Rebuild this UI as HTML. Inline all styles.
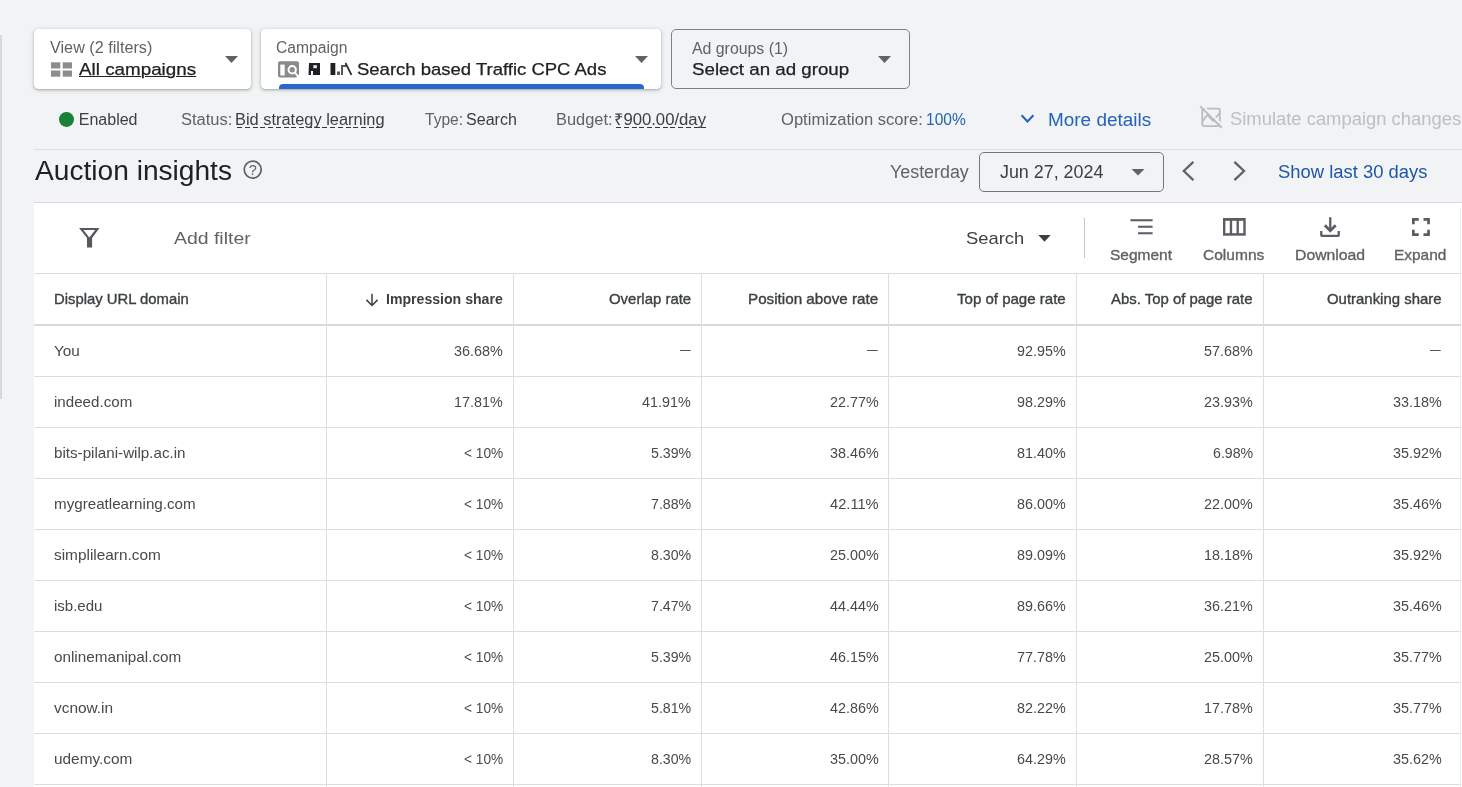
<!DOCTYPE html>
<html lang="en">
<head>
<meta charset="utf-8">
<title>Auction insights</title>
<style>
html,body{margin:0;padding:0;}
body{width:1462px;height:787px;overflow:hidden;position:relative;background:#f1f3f4;font-family:"Liberation Sans",Arial,sans-serif;}
#app{position:absolute;left:0;top:0;width:1462px;height:787px;overflow:hidden;will-change:transform;}
.abs,.t,svg.i{position:absolute;}
.t{white-space:nowrap;transform-origin:0 0;}
.med{-webkit-text-stroke:0.35px currentColor;}
.med2{-webkit-text-stroke:0.25px currentColor;}
.card{background:#fff;border-radius:4.5px;box-shadow:0 1px 2px rgba(60,64,67,.30),0 1px 4px 1px rgba(60,64,67,.15);}
.dsh{height:1.6px;background:repeating-linear-gradient(90deg,#33363a 0,#33363a 5px,transparent 5px,transparent 7.75px);}
.hl{background:#dddddd;height:1px;}
.vl{background:#dedede;width:1px;}
</style>
</head>
<body>
<div id="app">
<!-- left rail sliver -->
<div class="abs" style="left:0;top:35px;width:2px;height:364px;background:#d6d9dc;"></div>

<!-- selector cards -->
<div class="abs card" style="left:34px;top:29px;width:217px;height:60px;"></div>
<div class="abs card" style="left:261px;top:29px;width:400px;height:60px;overflow:hidden;">
  <div class="abs" style="left:18px;top:55px;width:365px;height:8px;background:#2868ca;border-radius:4px 4px 0 0;"></div>
</div>
<div class="abs" style="left:671px;top:29px;width:237px;height:58px;border:1px solid #7d8186;border-radius:5px;"></div>

<!-- dropdown arrows -->
<svg class="i" style="left:225px;top:56px" width="13" height="7" viewBox="0 0 13 7"><path d="M0 0h13L6.5 7z" fill="#5f6368"/></svg>
<svg class="i" style="left:635px;top:56px" width="13" height="7" viewBox="0 0 13 7"><path d="M0 0h13L6.5 7z" fill="#5f6368"/></svg>
<svg class="i" style="left:878px;top:56px" width="13" height="7" viewBox="0 0 13 7"><path d="M0 0h13L6.5 7z" fill="#5f6368"/></svg>

<!-- all campaigns grid icon -->
<svg class="i" style="left:51px;top:62px" width="21" height="15" viewBox="0 0 21 15"><g fill="#8d8d8d"><rect x="0" y="0.3" width="9.3" height="6.2"/><rect x="11.7" y="0.3" width="9.3" height="6.2"/><rect x="0" y="8.5" width="9.3" height="6.2"/><rect x="11.7" y="8.5" width="9.3" height="6.2"/></g></svg>

<!-- search campaign icon -->
<svg class="i" style="left:278px;top:61px" width="22" height="18" viewBox="0 0 22 18">
  <path d="M2 0.2h17a2 2 0 0 1 2 2v11.3l-3 3H2a2 2 0 0 1-2-2V2.2a2 2 0 0 1 2-2z" fill="#8a8a8a"/>
  <rect x="2.3" y="3.6" width="4.4" height="10.9" fill="#fff"/>
  <circle cx="14.2" cy="8.7" r="3.7" fill="none" stroke="#fff" stroke-width="2"/>
  <path d="M17 11.6l3.6 4.6" stroke="#fff" stroke-width="2" fill="none"/>
</svg>
<!-- redacted glyph blobs in campaign name -->
<svg class="i" style="left:307px;top:62px" width="46" height="14" viewBox="0 0 46 14">
  <g fill="#1f2023">
    <path d="M2 1h11v12H6V9H4v4H1.5z"/>
    <rect x="23.5" y="1" width="4.8" height="12"/>
  </g>
  <rect x="6.3" y="3.2" width="3.6" height="3" fill="#e8e8e8"/>
  <g fill="#55585c"><rect x="30" y="9.5" width="3" height="3.5"/><path d="M34 3h5v2h-3v8h-2z"/></g>
  <path d="M38.5 1l6 12" stroke="#2a2b2e" stroke-width="1.7" fill="none"/>
</svg>

<!-- status dot -->
<div class="abs" style="left:59.1px;top:112px;width:14.8px;height:14.8px;border-radius:50%;background:#198038;"></div>
<!-- dashed underlines -->
<div class="abs dsh" style="left:236.5px;top:126.6px;width:147.2px;"></div>
<div class="abs dsh" style="left:615.6px;top:126.6px;width:90.5px;"></div>
<!-- more details chevron -->
<svg class="i" style="left:1019px;top:112px" width="17" height="13" viewBox="0 0 17 13"><path d="M2.6 3.3l5.9 6.2 5.9-6.2" fill="none" stroke="#2463b8" stroke-width="2.1"/></svg>
<!-- simulate icon -->
<svg class="i" style="left:1199px;top:105px" width="26" height="26" viewBox="0 0 26 26"><g fill="none" stroke="#b9bcbf" stroke-width="1.800"><rect x="3.300" y="3.600" width="17.500" height="17.500" rx="1.500"/><path d="M3.300 16.500L8.500 10l5.500 6 7-8.500"/></g><path d="M2.700 -0.300L24.400 21.400" stroke="#f1f3f4" stroke-width="2" fill="none"/><path d="M1.100 1.100L22.800 22.800" stroke="#b9bcbf" stroke-width="1.900" fill="none"/></svg>

<!-- divider -->
<div class="abs hl" style="left:34px;top:149px;width:1428px;background:#dcdee1;"></div>

<!-- help icon -->
<svg class="i" style="left:242px;top:159px" width="22" height="22" viewBox="0 0 22 22"><circle cx="10.7" cy="10.6" r="8.5" fill="none" stroke="#5f6368" stroke-width="1.7"/></svg>
<span class="abs" style="left:242.7px;top:159.6px;width:20px;height:20px;line-height:20px;text-align:center;font-size:14.5px;color:#5f6368;">?</span>

<!-- date box -->
<div class="abs" style="left:979px;top:152px;width:183px;height:38px;border:1px solid #73777c;border-radius:5px;"></div>
<svg class="i" style="left:1131px;top:169px" width="14" height="7" viewBox="0 0 14 7"><path d="M0.5 0h13L7 6.6z" fill="#5f6368"/></svg>
<svg class="i" style="left:1180px;top:159px" width="18" height="24" viewBox="0 0 18 24"><path d="M13.4 2.8L3.8 12l9.600 9.200" fill="none" stroke="#5f6368" stroke-width="2.3"/></svg>
<svg class="i" style="left:1230px;top:159px" width="18" height="24" viewBox="0 0 18 24"><path d="M4.400 2.800L14 12l-9.600 9.200" fill="none" stroke="#5f6368" stroke-width="2.3"/></svg>

<!-- table panel -->
<div class="abs" style="left:34px;top:202px;width:1428px;height:585px;background:#fff;border-top:1px solid #d9dbde;"></div>
<div class="abs" style="left:1460px;top:207px;width:1px;height:580px;background:#eeeff0;"></div>
<div class="abs hl" style="left:34px;top:273px;width:1427px;"></div>
<div class="abs" style="left:34px;top:324px;width:1427px;height:2px;background:#d9d9d9;"></div>
<div class="abs hl" style="left:34px;top:376px;width:1427px;"></div>
<div class="abs hl" style="left:34px;top:427px;width:1427px;"></div>
<div class="abs hl" style="left:34px;top:478px;width:1427px;"></div>
<div class="abs hl" style="left:34px;top:529px;width:1427px;"></div>
<div class="abs hl" style="left:34px;top:580px;width:1427px;"></div>
<div class="abs hl" style="left:34px;top:631px;width:1427px;"></div>
<div class="abs hl" style="left:34px;top:682px;width:1427px;"></div>
<div class="abs hl" style="left:34px;top:733px;width:1427px;"></div>
<div class="abs hl" style="left:34px;top:784px;width:1427px;"></div>
<div class="abs vl" style="left:326px;top:274px;height:513px;"></div>
<div class="abs vl" style="left:513px;top:274px;height:513px;"></div>
<div class="abs vl" style="left:701px;top:274px;height:513px;"></div>
<div class="abs vl" style="left:888px;top:274px;height:513px;"></div>
<div class="abs vl" style="left:1076px;top:274px;height:513px;"></div>
<div class="abs vl" style="left:1263px;top:274px;height:513px;"></div>
<!-- toolbar icons -->
<svg class="i" style="left:78px;top:226px" width="24" height="24" viewBox="0 0 24 24"><path fill-rule="evenodd" fill="#54575b" d="M1.100 1.900H21.500L14.100 12.100V21.500H9V12.100zM5.400 4.100H17.200L11.300 11.400z"/></svg>
<svg class="i" style="left:1038px;top:235px" width="13" height="7" viewBox="0 0 13 7"><path d="M0.3 0h12.400L6.500 6.800z" fill="#3c4043"/></svg>
<div class="abs" style="left:1084px;top:218px;width:1px;height:40px;background:#c4c7ca;"></div>
<svg class="i" style="left:1129px;top:218px" width="26" height="18" viewBox="0 0 26 18"><g fill="#5f6368"><rect x="1.400" y="1.200" width="22.200" height="2.100"/><rect x="9" y="7.700" width="14.600" height="2.100"/><rect x="9" y="14.200" width="14.600" height="2.100"/></g></svg>
<svg class="i" style="left:1222px;top:217px" width="25" height="20" viewBox="0 0 25 20"><rect x="1" y="1" width="22.700" height="17.700" fill="#5a5d61"/><g fill="#fff"><rect x="3.400" y="3.800" width="4.400" height="12.400"/><rect x="10.150" y="3.800" width="4.400" height="12.400"/><rect x="16.900" y="3.800" width="4.400" height="12.400"/></g></svg>
<svg class="i" style="left:1318px;top:216px" width="24" height="22" viewBox="0 0 24 22"><g fill="none" stroke="#5a5d61"><path d="M12.250 1.200v13" stroke-width="2.300"/><path d="M6.800 9.300l5.450 5.450 5.450-5.450" stroke-width="2.700"/><path d="M3.250 15.100v3.300a1.450 1.450 0 0 0 1.450 1.450h14.600a1.450 1.450 0 0 0 1.450-1.450v-3.300" stroke-width="2.300"/></g></svg>
<svg class="i" style="left:1411px;top:217px" width="20" height="20" viewBox="0 0 20 20"><g fill="none" stroke="#5a5d61" stroke-width="2.700"><path d="M2.350 7.200V2.350h5.400M12.500 2.350h5.050v4.850M17.550 12.700v4.850h-5.050M7.750 17.550h-5.400v-4.850"/></g></svg>
<!-- sort arrow -->
<svg class="i" style="left:364px;top:292px" width="16" height="16" viewBox="0 0 16 16"><path d="M8 1.700v11.600M2.400 7.900L8 13.500l5.600-5.600" fill="none" stroke="#3c4043" stroke-width="1.500"/></svg>

<span class="t" style="left:49.63px;top:36.76px;font-size:16px;line-height:21px;color:#5f6368;transform:scaleX(1.0127);">View (2 filters)</span>
<span class="t med2" style="left:79.46px;top:58.71px;font-size:16.7px;line-height:22px;color:#202124;transform:scaleX(1.1272);text-decoration:underline;text-underline-offset:0.6px;text-decoration-thickness:1.2px;">All campaigns</span>
<span class="t" style="left:275.94px;top:36.76px;font-size:16px;line-height:21px;color:#5f6368;transform:scaleX(0.9796);">Campaign</span>
<span class="t med2" style="left:356.52px;top:58.71px;font-size:16.7px;line-height:22px;color:#202124;transform:scaleX(1.1080);">Search based Traffic CPC Ads</span>
<span class="t" style="left:692.09px;top:37.76px;font-size:16px;line-height:21px;color:#5f6368;transform:scaleX(0.9908);">Ad groups (1)</span>
<span class="t med2" style="left:691.53px;top:58.71px;font-size:16.7px;line-height:22px;color:#202124;transform:scaleX(1.1220);">Select an ad group</span>
<span class="t" style="left:78.79px;top:109.16px;font-size:16px;line-height:21px;color:#3c4043;">Enabled</span>
<span class="t" style="left:180.57px;top:109.16px;font-size:16px;line-height:21px;color:#5f6368;transform:scaleX(1.0316);">Status:</span>
<span class="t dash" style="left:234.97px;top:109.16px;font-size:16px;line-height:21px;color:#3c4043;transform:scaleX(1.0254);">Bid strategy learning</span>
<span class="t" style="left:425.43px;top:109.16px;font-size:16px;line-height:21px;color:#5f6368;transform:scaleX(0.9731);">Type:</span>
<span class="t" style="left:465.84px;top:109.16px;font-size:16px;line-height:21px;color:#3c4043;transform:scaleX(1.0034);">Search</span>
<span class="t" style="left:555.87px;top:109.16px;font-size:16px;line-height:21px;color:#5f6368;transform:scaleX(1.0264);">Budget:</span>
<span class="t dash" style="left:614.38px;top:109.16px;font-size:16px;line-height:21px;color:#3c4043;transform:scaleX(1.0432);">₹900.00/day</span>
<span class="t" style="left:781.02px;top:109.16px;font-size:16px;line-height:21px;color:#5f6368;transform:scaleX(1.0362);">Optimization score:</span>
<span class="t" style="left:926.49px;top:109.16px;font-size:16px;line-height:21px;color:#2463b8;transform:scaleX(0.9712);">100%</span>
<span class="t" style="left:1047.96px;top:109.06px;font-size:18px;line-height:23px;color:#2463b8;transform:scaleX(1.0518);">More details</span>
<span class="t" style="left:1230.38px;top:108.04px;font-size:17.5px;line-height:23px;color:#bcbfc3;transform:scaleX(1.0513);">Simulate campaign changes</span>
<span class="t" style="left:34.96px;top:154.14px;font-size:27px;line-height:35px;color:#202124;transform:scaleX(1.0417);">Auction insights</span>
<span class="t" style="left:889.83px;top:161.06px;font-size:18px;line-height:23px;color:#5f6368;transform:scaleX(0.9923);">Yesterday</span>
<span class="t" style="left:999.81px;top:161.06px;font-size:18px;line-height:23px;color:#3c4043;transform:scaleX(0.9927);">Jun 27, 2024</span>
<span class="t" style="left:1277.98px;top:161.06px;font-size:18px;line-height:23px;color:#1f55ab;transform:scaleX(1.0229);">Show last 30 days</span>
<span class="t" style="left:174.36px;top:227.51px;font-size:17px;line-height:22px;color:#5f6368;transform:scaleX(1.1431);">Add filter</span>
<span class="t" style="left:966.43px;top:227.91px;font-size:17px;line-height:22px;color:#3c4043;transform:scaleX(1.0797);">Search</span>
<span class="t med" style="left:1110.26px;top:244.50px;font-size:15px;line-height:20px;color:#5f6368;transform:scaleX(1.0331);">Segment</span>
<span class="t med" style="left:1203.30px;top:244.50px;font-size:15px;line-height:20px;color:#5f6368;transform:scaleX(1.0359);">Columns</span>
<span class="t med" style="left:1294.50px;top:244.50px;font-size:15px;line-height:20px;color:#5f6368;transform:scaleX(1.0515);">Download</span>
<span class="t med" style="left:1394.28px;top:244.50px;font-size:15px;line-height:20px;color:#5f6368;transform:scaleX(1.0275);">Expand</span>
<span class="t med" style="left:53.58px;top:290.48px;font-size:14.5px;line-height:19px;color:#3c4043;transform:scaleX(1.0241);">Display URL domain</span>
<span class="t" style="left:386.31px;top:290.48px;font-size:14.5px;line-height:19px;color:#3c4043;font-weight:700;transform:scaleX(0.9723);">Impression share</span>
<span class="t med" style="left:608.83px;top:290.48px;font-size:14.5px;line-height:19px;color:#3c4043;transform:scaleX(1.0300);">Overlap rate</span>
<span class="t med" style="left:747.76px;top:290.48px;font-size:14.5px;line-height:19px;color:#3c4043;transform:scaleX(1.0494);">Position above rate</span>
<span class="t med" style="left:957.45px;top:290.48px;font-size:14.5px;line-height:19px;color:#3c4043;transform:scaleX(1.0371);">Top of page rate</span>
<span class="t med" style="left:1110.60px;top:290.48px;font-size:14.5px;line-height:19px;color:#3c4043;transform:scaleX(1.0285);">Abs. Top of page rate</span>
<span class="t med" style="left:1327.00px;top:290.48px;font-size:14.5px;line-height:19px;color:#3c4043;transform:scaleX(1.0297);">Outranking share</span>
<span class="t" style="left:54.00px;top:340.90px;font-size:15px;line-height:20px;color:#47494c;transform:scaleX(1.0205);">You</span>
<span class="t" style="left:454.40px;top:340.90px;font-size:15px;line-height:20px;color:#47494c;transform:scaleX(0.9558);">36.68%</span>
<span class="t" style="left:679.70px;top:341.20px;font-size:13px;line-height:17px;color:#3c3f43;transform:scaleX(0.8231);">—</span>
<span class="t" style="left:867.00px;top:341.20px;font-size:13px;line-height:17px;color:#3c3f43;transform:scaleX(0.8231);">—</span>
<span class="t" style="left:1017.20px;top:340.90px;font-size:15px;line-height:20px;color:#47494c;transform:scaleX(0.9558);">92.95%</span>
<span class="t" style="left:1204.40px;top:340.90px;font-size:15px;line-height:20px;color:#47494c;transform:scaleX(0.9558);">57.68%</span>
<span class="t" style="left:1430.15px;top:341.20px;font-size:13px;line-height:17px;color:#3c3f43;transform:scaleX(0.8231);">—</span>
<span class="t" style="left:54.00px;top:391.90px;font-size:15px;line-height:20px;color:#47494c;transform:scaleX(1.0088);">indeed.com</span>
<span class="t" style="left:454.40px;top:391.90px;font-size:15px;line-height:20px;color:#47494c;transform:scaleX(0.9558);">17.81%</span>
<span class="t" style="left:642.40px;top:391.90px;font-size:15px;line-height:20px;color:#47494c;transform:scaleX(0.9558);">41.91%</span>
<span class="t" style="left:829.70px;top:391.90px;font-size:15px;line-height:20px;color:#47494c;transform:scaleX(0.9558);">22.77%</span>
<span class="t" style="left:1017.20px;top:391.90px;font-size:15px;line-height:20px;color:#47494c;transform:scaleX(0.9558);">98.29%</span>
<span class="t" style="left:1204.40px;top:391.90px;font-size:15px;line-height:20px;color:#47494c;transform:scaleX(0.9558);">23.93%</span>
<span class="t" style="left:1393.20px;top:391.90px;font-size:15px;line-height:20px;color:#47494c;transform:scaleX(0.9558);">33.18%</span>
<span class="t" style="left:54.00px;top:442.90px;font-size:15px;line-height:20px;color:#47494c;transform:scaleX(1.0113);">bits-pilani-wilp.ac.in</span>
<span class="t" style="left:463.84px;top:442.90px;font-size:15px;line-height:20px;color:#47494c;transform:scaleX(0.9120);">&lt; 10%</span>
<span class="t" style="left:650.82px;top:442.90px;font-size:15px;line-height:20px;color:#47494c;transform:scaleX(0.9452);">5.39%</span>
<span class="t" style="left:829.70px;top:442.90px;font-size:15px;line-height:20px;color:#47494c;transform:scaleX(0.9558);">38.46%</span>
<span class="t" style="left:1017.20px;top:442.90px;font-size:15px;line-height:20px;color:#47494c;transform:scaleX(0.9558);">81.40%</span>
<span class="t" style="left:1212.82px;top:442.90px;font-size:15px;line-height:20px;color:#47494c;transform:scaleX(0.9452);">6.98%</span>
<span class="t" style="left:1393.20px;top:442.90px;font-size:15px;line-height:20px;color:#47494c;transform:scaleX(0.9558);">35.92%</span>
<span class="t" style="left:54.00px;top:493.90px;font-size:15px;line-height:20px;color:#47494c;transform:scaleX(1.0115);">mygreatlearning.com</span>
<span class="t" style="left:463.84px;top:493.90px;font-size:15px;line-height:20px;color:#47494c;transform:scaleX(0.9120);">&lt; 10%</span>
<span class="t" style="left:650.82px;top:493.90px;font-size:15px;line-height:20px;color:#47494c;transform:scaleX(0.9452);">7.88%</span>
<span class="t" style="left:829.70px;top:493.90px;font-size:15px;line-height:20px;color:#47494c;transform:scaleX(0.9772);">42.11%</span>
<span class="t" style="left:1017.20px;top:493.90px;font-size:15px;line-height:20px;color:#47494c;transform:scaleX(0.9558);">86.00%</span>
<span class="t" style="left:1204.40px;top:493.90px;font-size:15px;line-height:20px;color:#47494c;transform:scaleX(0.9558);">22.00%</span>
<span class="t" style="left:1393.20px;top:493.90px;font-size:15px;line-height:20px;color:#47494c;transform:scaleX(0.9558);">35.46%</span>
<span class="t" style="left:54.00px;top:544.90px;font-size:15px;line-height:20px;color:#47494c;transform:scaleX(1.0252);">simplilearn.com</span>
<span class="t" style="left:463.84px;top:544.90px;font-size:15px;line-height:20px;color:#47494c;transform:scaleX(0.9120);">&lt; 10%</span>
<span class="t" style="left:650.82px;top:544.90px;font-size:15px;line-height:20px;color:#47494c;transform:scaleX(0.9452);">8.30%</span>
<span class="t" style="left:829.70px;top:544.90px;font-size:15px;line-height:20px;color:#47494c;transform:scaleX(0.9558);">25.00%</span>
<span class="t" style="left:1017.20px;top:544.90px;font-size:15px;line-height:20px;color:#47494c;transform:scaleX(0.9558);">89.09%</span>
<span class="t" style="left:1204.40px;top:544.90px;font-size:15px;line-height:20px;color:#47494c;transform:scaleX(0.9558);">18.18%</span>
<span class="t" style="left:1393.20px;top:544.90px;font-size:15px;line-height:20px;color:#47494c;transform:scaleX(0.9558);">35.92%</span>
<span class="t" style="left:54.00px;top:595.90px;font-size:15px;line-height:20px;color:#47494c;">isb.edu</span>
<span class="t" style="left:463.84px;top:595.90px;font-size:15px;line-height:20px;color:#47494c;transform:scaleX(0.9120);">&lt; 10%</span>
<span class="t" style="left:650.82px;top:595.90px;font-size:15px;line-height:20px;color:#47494c;transform:scaleX(0.9452);">7.47%</span>
<span class="t" style="left:829.70px;top:595.90px;font-size:15px;line-height:20px;color:#47494c;transform:scaleX(0.9558);">44.44%</span>
<span class="t" style="left:1017.20px;top:595.90px;font-size:15px;line-height:20px;color:#47494c;transform:scaleX(0.9558);">89.66%</span>
<span class="t" style="left:1204.40px;top:595.90px;font-size:15px;line-height:20px;color:#47494c;transform:scaleX(0.9558);">36.21%</span>
<span class="t" style="left:1393.20px;top:595.90px;font-size:15px;line-height:20px;color:#47494c;transform:scaleX(0.9558);">35.46%</span>
<span class="t" style="left:54.00px;top:646.90px;font-size:15px;line-height:20px;color:#47494c;transform:scaleX(1.0176);">onlinemanipal.com</span>
<span class="t" style="left:463.84px;top:646.90px;font-size:15px;line-height:20px;color:#47494c;transform:scaleX(0.9120);">&lt; 10%</span>
<span class="t" style="left:650.82px;top:646.90px;font-size:15px;line-height:20px;color:#47494c;transform:scaleX(0.9452);">5.39%</span>
<span class="t" style="left:829.70px;top:646.90px;font-size:15px;line-height:20px;color:#47494c;transform:scaleX(0.9558);">46.15%</span>
<span class="t" style="left:1017.20px;top:646.90px;font-size:15px;line-height:20px;color:#47494c;transform:scaleX(0.9558);">77.78%</span>
<span class="t" style="left:1204.40px;top:646.90px;font-size:15px;line-height:20px;color:#47494c;transform:scaleX(0.9558);">25.00%</span>
<span class="t" style="left:1393.20px;top:646.90px;font-size:15px;line-height:20px;color:#47494c;transform:scaleX(0.9558);">35.77%</span>
<span class="t" style="left:54.00px;top:697.90px;font-size:15px;line-height:20px;color:#47494c;transform:scaleX(1.0269);">vcnow.in</span>
<span class="t" style="left:463.84px;top:697.90px;font-size:15px;line-height:20px;color:#47494c;transform:scaleX(0.9120);">&lt; 10%</span>
<span class="t" style="left:650.82px;top:697.90px;font-size:15px;line-height:20px;color:#47494c;transform:scaleX(0.9452);">5.81%</span>
<span class="t" style="left:829.70px;top:697.90px;font-size:15px;line-height:20px;color:#47494c;transform:scaleX(0.9558);">42.86%</span>
<span class="t" style="left:1017.20px;top:697.90px;font-size:15px;line-height:20px;color:#47494c;transform:scaleX(0.9558);">82.22%</span>
<span class="t" style="left:1204.40px;top:697.90px;font-size:15px;line-height:20px;color:#47494c;transform:scaleX(0.9558);">17.78%</span>
<span class="t" style="left:1393.20px;top:697.90px;font-size:15px;line-height:20px;color:#47494c;transform:scaleX(0.9558);">35.77%</span>
<span class="t" style="left:54.00px;top:748.90px;font-size:15px;line-height:20px;color:#47494c;transform:scaleX(1.0263);">udemy.com</span>
<span class="t" style="left:463.84px;top:748.90px;font-size:15px;line-height:20px;color:#47494c;transform:scaleX(0.9120);">&lt; 10%</span>
<span class="t" style="left:650.82px;top:748.90px;font-size:15px;line-height:20px;color:#47494c;transform:scaleX(0.9452);">8.30%</span>
<span class="t" style="left:829.70px;top:748.90px;font-size:15px;line-height:20px;color:#47494c;transform:scaleX(0.9558);">35.00%</span>
<span class="t" style="left:1017.20px;top:748.90px;font-size:15px;line-height:20px;color:#47494c;transform:scaleX(0.9558);">64.29%</span>
<span class="t" style="left:1204.40px;top:748.90px;font-size:15px;line-height:20px;color:#47494c;transform:scaleX(0.9558);">28.57%</span>
<span class="t" style="left:1393.20px;top:748.90px;font-size:15px;line-height:20px;color:#47494c;transform:scaleX(0.9558);">35.62%</span>
</div>
</body>
</html>
